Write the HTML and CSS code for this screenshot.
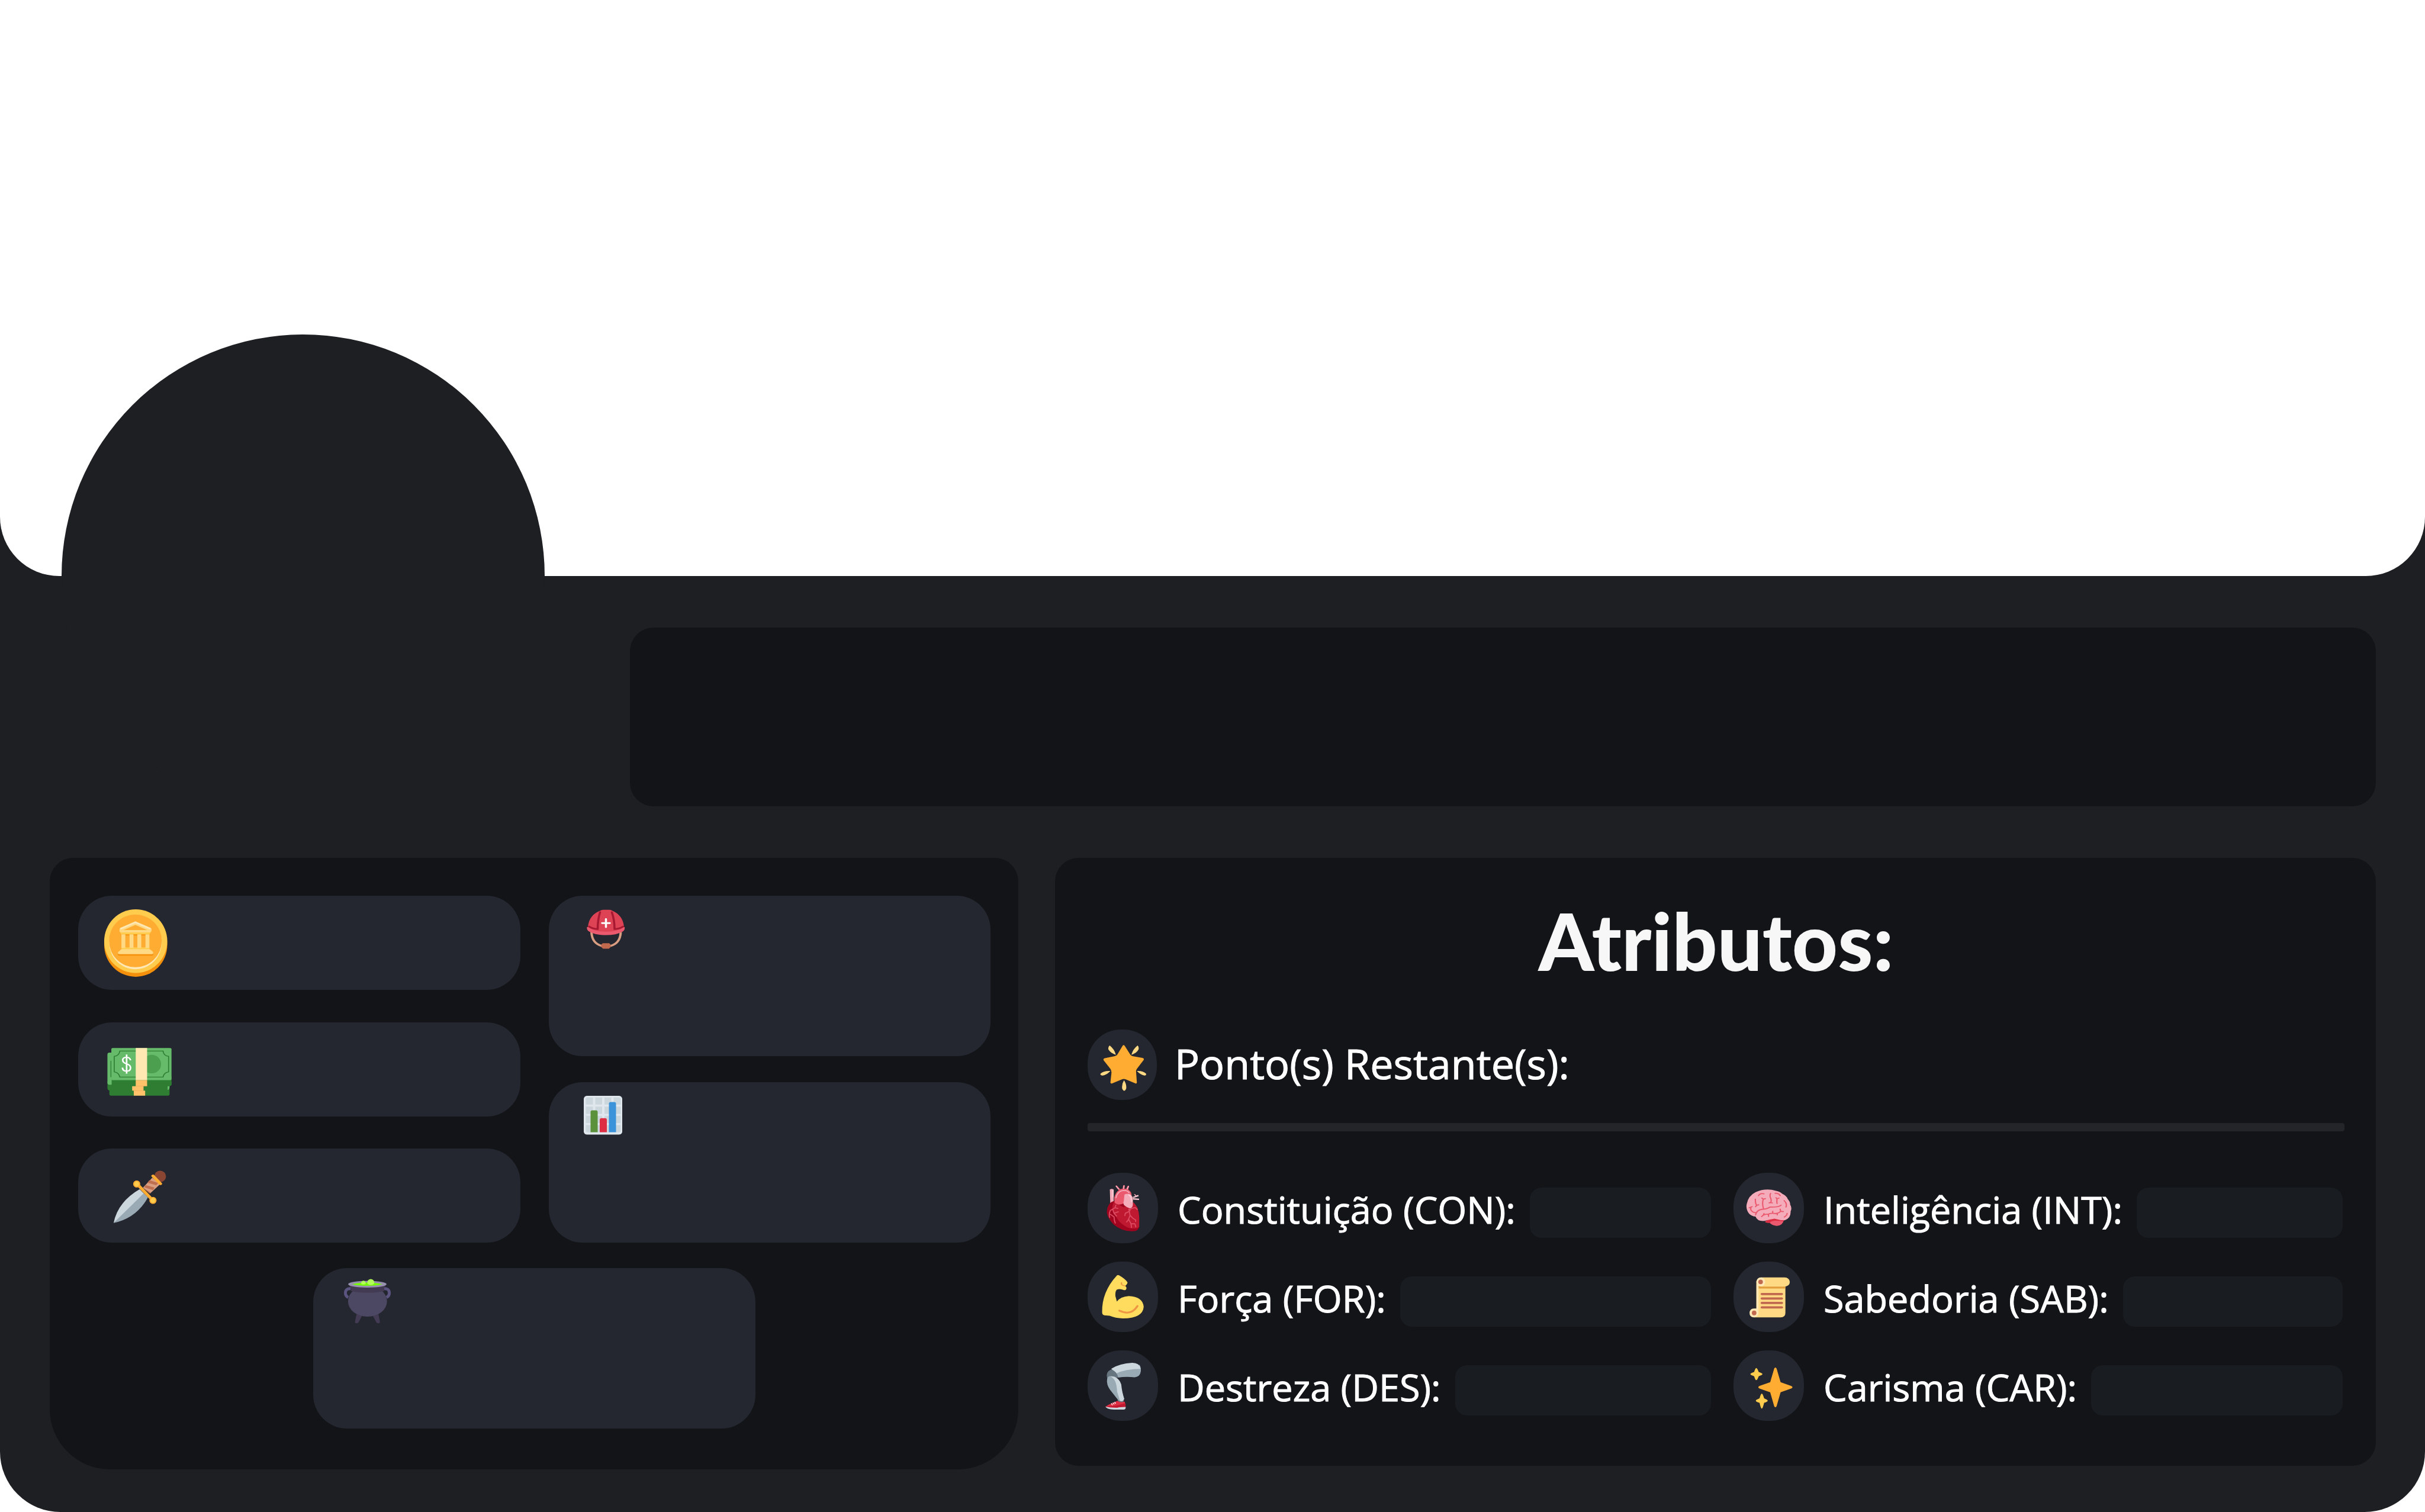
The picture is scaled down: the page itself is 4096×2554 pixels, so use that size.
FILE: index.html
```html
<!DOCTYPE html>
<html lang="pt-BR">
<head>
<meta charset="utf-8">
<title>Perfil</title>
<link rel="stylesheet" href="styles.css">
</head>
<body>
<main class="profile">
  <header class="banner"><div class="avatar"></div></header>
  <div class="content">
    <section class="bio" aria-label="Sobre"></section>
    <div class="panels">
      <section class="panel inventory" aria-label="Recursos">
        <div class="column">
          <div class="slot">
            <svg class="slot-icon" viewBox="98 164 364 375" preserveAspectRatio="none" role="img" aria-label="Moedas">
              <ellipse cx="275" cy="360" rx="97" ry="127" fill="#f4900c"/>
              <ellipse cx="275" cy="345" rx="97" ry="127" fill="#ffcc4d"/>
              <ellipse cx="274" cy="349" rx="81" ry="108" fill="#ffe8b6"/>
              <ellipse cx="274" cy="344" rx="81" ry="105" fill="#ffac33"/>
              <path fill="#f4900c" d="M231 316H317V322H231ZM220 392H329V398Q329 403 325 403H224Q220 403 220 398Z"/>
              <path fill="#ffcc4d" d="M225 300H323V306L317 318H231L225 306ZM231 370H317V379H231Z"/>
              <path fill="#ffd983" d="M274 266L321 292Q324 294 324 300Q323 310 317 310H231Q225 310 225 300Q225 294 228 292ZM231 318H243V372H231ZM256 318H268V372H256ZM280 318H292V372H280ZM305 318H317V372H305ZM231 377H318L325 384Q329 388 329 393Q329 397 325 397H224Q220 397 220 392Q220 388 225 384Z"/>
              <path d="M228 296L274 270L320 296" fill="none" stroke="#ffe8b6" stroke-width="6"/>
              <path fill="#ffac33" d="M274 280L310 301H238Z"/>
            </svg>
          </div>
          <div class="slot">
            <svg class="slot-icon" viewBox="98 664 364 375" preserveAspectRatio="none" role="img" aria-label="Dinheiro">
              <path fill="#2e7d32" d="M188 900H385V908Q385 917 379 918V949Q379 956 374 956H199Q194 956 194 949V935Q188 934 188 926Z"/>
              <path fill="#66bb6a" d="M194 784H210V912H194Q188 912 188 904V792Q188 784 194 784ZM373 918H379Q379 933 373 933Z"/>
              <path d="M199 817V882" stroke="#2e7d32" stroke-width="3"/>
              <path fill="#2e7d32" d="M201 880H385V910Q385 917 379 917H201Z"/>
              <rect x="200" y="766" width="185" height="128" rx="5" fill="#66bb6a"/>
              <path d="M226 778H359Q361 797 376 799V861Q361 864 359 882H226Q224 864 209 861V799Q224 797 226 778Z" fill="none" stroke="#2e7d32" stroke-width="3"/>
              <ellipse cx="324" cy="830" rx="29" ry="37" fill="#4b9f4f"/>
              <path fill="#ffe8b2" d="M275 766H310V894H275Z"/>
              <path fill="#ffc26b" d="M275 894H310V918H299V936H304V956H269V936H264V918H275Z"/>
              <path d="M269 936H299M275 918H310" stroke="#dba052" stroke-width="1"/>
              <path d="M259 815Q257 803 247 803Q235 803 235 814Q235 825 247 829Q259 833 259 845Q259 858 247 858Q235 858 234 844M247 792V868" fill="none" stroke="#fff" stroke-width="5"/>
            </svg>
          </div>
          <div class="slot">
            <svg class="slot-icon" viewBox="98 1168 364 374" preserveAspectRatio="none" role="img" aria-label="Adaga">
              <path fill="#ccd6dd" d="M207 1464Q220 1380 287 1330L312 1362L290 1390Z"/>
              <path fill="#99aab5" d="M207 1464L299 1347L312 1363Q278 1444 207 1464Z"/>
              <path fill="#d99e82" d="M326 1284L350 1310L319 1347L297 1324Z"/>
              <path fill="#be6f50" d="M317 1294L345 1305L338 1314L311 1304ZM306 1314L333 1323L328 1333L301 1322ZM300 1326L321 1343L317 1346Z"/>
              <ellipse cx="350" cy="1279" rx="18" ry="23" fill="#8a4633"/>
              <path d="M328 1277L351 1308M280 1310L326 1372" stroke="#ffac33" stroke-width="10" stroke-linecap="round"/>
              <g fill="#ffcc4d" stroke="#ffac33" stroke-width="4"><ellipse cx="278" cy="1309" rx="9" ry="12"/><ellipse cx="328" cy="1374" rx="9" ry="12"/></g>
            </svg>
          </div>
        </div>
        <div class="column">
          <div class="slot slot-tall">
            <svg class="slot-icon" viewBox="34 53 364 375" preserveAspectRatio="none" role="img" aria-label="Defesa">
              <path d="M178 198Q180 243 213 253M277 198Q275 243 242 253" fill="none" stroke="#d99e82" stroke-width="8"/>
              <path fill="#c1694f" d="M216 242H238L243 248V257L237 264H217L211 257V248Z"/>
              <path fill="#ea596e" d="M163 178Q227 160 290 178Q292 190 282 197Q262 210 227 210Q192 210 172 197Q161 190 163 178Z"/>
              <path fill="#dd4255" d="M166 176Q171 128 209 112Q212 109 218 109H238Q244 109 247 112Q284 130 288 176Q270 196 227 196Q184 196 166 176Z"/>
              <path d="M170 176Q182 185 199 186Q199 150 207 119M285 176Q273 185 256 186Q256 150 247 119" fill="none" stroke="#a61931" stroke-width="7" stroke-linecap="round" stroke-linejoin="round"/>
              <path d="M227 146V178M214 162H240" stroke="#fff" stroke-width="7" stroke-linecap="round"/>
            </svg>
          </div>
          <div class="slot slot-tall">
            <svg class="slot-icon" viewBox="34 795 364 375" preserveAspectRatio="none" role="img" aria-label="Nível">
              <rect x="152" y="849" width="130" height="155" rx="12" fill="#e1e8ed"/>
              <rect x="159" y="856" width="118" height="138" rx="7" fill="#ccd6dd"/>
              <path d="M159 888H277M159 925H277M159 962H277M187 856V994M218 856V994M249 856V994" stroke="#e1e8ed" stroke-width="8"/>
              <path fill="#5c913b" d="M175 994V914Q175 907 181 907H193Q199 907 199 914V994Z"/>
              <path fill="#dd2e44" d="M206 994V945Q206 938 212 938H224Q230 938 230 945V994Z"/>
              <path fill="#3b94d9" d="M237 994V881Q237 874 243 874H255Q261 874 261 881V994Z"/>
            </svg>
          </div>
        </div>
        <div class="slot slot-tall slot-center">
          <svg class="slot-icon" viewBox="66 96 765 608" preserveAspectRatio="none" role="img" aria-label="Poções">
            <path fill="#433b53" d="M346 394L382 404L358 448Q350 455 341 452Q335 448 336 441ZM488 394L451 404L475 448Q483 455 492 452Q498 448 497 441Z"/>
            <path d="M308 229Q276 226 274 256Q274 276 292 286M524 229Q556 226 558 256Q558 276 540 286" fill="none" stroke="#5c5480" stroke-width="19"/>
            <ellipse cx="417" cy="310" rx="126" ry="100" fill="#4c4763"/>
            <path fill="#433b53" d="M297 203H537Q522 225 524 244Q480 255 417 255Q354 255 310 244Q312 225 297 203Z"/>
            <ellipse cx="416" cy="200" rx="124" ry="22" fill="#9790ae"/>
            <path fill="#77ff00" d="M318 200Q360 190 416 190Q472 190 513 200Q472 210 416 210Q360 210 318 200Z"/>
            <path fill="#b2ff59" d="M375 196Q376 178 391 177Q405 178 406 196Q400 202 391 202Q380 202 375 196ZM416 194Q413 170 438 167Q463 170 460 194Q453 205 438 205Q423 205 416 194Z"/>
          </svg>
        </div>
      </section>

      <section class="panel attributes">
        <h1 class="title">Atributos:</h1>
        <div class="points">
          <span class="badge">
            <svg viewBox="108 111 194 456" preserveAspectRatio="none" aria-hidden="true">
              <path fill="#ffac33" d="M209 212Q211 212 213 220L227 271Q229 280 234 283L262 295Q267 298 265 308L246 366Q243 376 244 390L246 453Q246 464 242 460L214 433Q209 429 205 433L177 460Q172 464 172 453L175 390Q175 376 172 366L153 310Q151 300 156 297L184 283Q190 280 192 271L205 220Q207 212 209 212Z"/>
              <g fill="#ffd983"><path d="M170 214Q184 240 187 275Q172 262 166 238Q166 220 170 214ZM248 214Q234 240 231 275Q246 262 251 238Q252 220 248 214ZM172 379Q162 404 151 409Q143 410 144 397Q152 377 172 379ZM246 379Q256 404 267 409Q273 410 272 397Q264 377 246 379ZM210 440Q218 466 216 495Q213 508 211 508Q208 508 205 495Q203 466 210 440Z"/></g>
            </svg>
          </span>
          <span class="points-label">Ponto(s) Restante(s):</span>
        </div>
        <hr class="divider">
        <form class="stats">
          <div class="stat">
            <span class="badge">
              <svg viewBox="-51 -42 453 453" aria-hidden="true">
                <path fill="#ea596e" d="M129 43Q135 36 141 44L158 64L174 60L178 40Q184 34 189 41L186 60L197 62L206 43Q213 38 216 46L210 66Q232 80 232 104L180 160Q140 170 122 150L120 118Q130 82 150 70Z"/>
                <path fill="#f4abba" d="M92 66Q104 58 117 66V140Q108 152 95 152Z"/>
                <path d="M112 68V115" stroke="#ffd0d8" stroke-width="7"/>
                <path d="M132 118Q142 76 178 72Q205 70 216 86M133 44L148 62M183 42L181 58M212 45L204 61" fill="none" stroke="#f4abba" stroke-width="7" stroke-linecap="round"/>
                <path fill="#a0041e" d="M120 140Q96 145 84 166Q70 190 74 220Q80 254 118 292Q168 333 230 334Q274 336 279 310L270 180Z"/>
                <path fill="#be1931" d="M124 140Q100 170 112 210Q130 236 150 268Q190 310 230 316Q270 318 281 306V240Q278 180 244 148L180 180Q150 166 124 140Z"/>
                <path fill="#ea596e" d="M124 130L186 98L184 152Q160 168 138 160Q124 154 122 146Z"/>
                <path fill="#f4abba" d="M186 98Q208 88 228 100L241 118L240 166Q236 186 220 186Q200 180 184 166Q176 155 182 140Z"/>
                <path d="M212 98Q232 106 232 146M242 117L276 104M242 126L280 129" fill="none" stroke="#ffccd5" stroke-width="9"/>
                <path d="M262 108L250 96" stroke="#f4abba" stroke-width="6"/>
                <path d="M132 164L125 183L95 201Q84 226 92 248M125 183L146 188M111 194L119 218L138 212L149 208M119 218L137 238M94 224L119 242Q120 265 128 284M214 190L222 232L210 262L198 276M214 190L224 202M222 232L240 250L258 262V274M214 208L192 218L188 236M214 258L228 286L232 312M228 286L253 286L260 308M218 196L236 186L256 182L270 196" fill="none" stroke="#dd4b63" stroke-width="7" stroke-linejoin="round"/>
              </svg>
            </span>
            <label for="con">Constituição (CON):</label>
            <input id="con" class="field" type="text">
          </div>
          <div class="stat">
            <span class="badge">
              <svg viewBox="76 68 338 395" preserveAspectRatio="none" aria-hidden="true">
                <path fill="#ea596e" d="M228 340L272 328L317 334Q312 364 283 366Q260 364 249 348Q236 350 228 344Z"/>
                <path fill="#dd2e44" d="M228 342Q246 324 272 324Q300 330 320 332L316 340Q292 336 272 337Q256 340 247 349Q234 349 228 342Z"/>
                <path fill="#f4abba" d="M138 256Q142 200 182 177Q230 152 280 169Q298 172 310 186Q330 196 336 215Q348 230 348 246Q358 266 350 284Q352 322 322 334Q298 334 272 325Q246 330 226 338Q190 342 182 314Q140 306 138 256Z"/>
                <path d="M196 196Q204 181 222 186M276 183Q292 182 300 196M181 216Q180 240 187 250M197 248L187 250L182 258M254 184Q248 196 255 212Q259 226 254 236M247 237L254 234L262 237M212 210L219 216L229 213M219 216Q212 240 220 270M280 208L285 214L294 210M285 214Q283 230 285 240M319 224Q334 240 328 260M159 260V276Q170 296 188 290M152 264L165 258M182 304Q186 278 212 273Q236 272 252 260Q290 262 304 250M211 314Q222 298 240 301Q256 292 276 297Q298 294 302 282L300 272M302 284L315 286M222 297L220 304M244 301V312M264 284V295M286 296V304M320 316Q334 306 333 296" fill="none" stroke="#ea596e" stroke-width="6" stroke-linecap="round" stroke-linejoin="round"/>
              </svg>
            </span>
            <label for="int">Inteligência (INT):</label>
            <input id="int" class="field" type="text">
          </div>
          <div class="stat">
            <span class="badge">
              <svg viewBox="96 570 339 395" preserveAspectRatio="none" aria-hidden="true">
                <path fill="#ffdc5d" d="M237 648Q242 643 250 649Q276 666 288 686Q289 694 277 707Q284 711 283 722Q280 732 272 730Q250 720 236 728Q228 740 230 764L237 794Q254 766 294 763Q362 766 366 824Q362 888 266 889Q230 888 202 874L176 871Q166 868 166 854Q164 740 237 648Z"/>
                <path d="M259 686Q257 696 260 699Q268 706 277 706M258 690L263 692" fill="none" stroke="#ef9645" stroke-width="5"/>
                <path d="M249 845Q306 876 336 819" fill="none" stroke="#ef9645" stroke-width="10" stroke-linecap="round"/>
              </svg>
            </span>
            <label for="for">Força (FOR):</label>
            <input id="for" class="field" type="text">
          </div>
          <div class="stat">
            <span class="badge">
              <svg viewBox="76 570 338 395" preserveAspectRatio="none" aria-hidden="true">
                <path fill="#ffd983" d="M186 690H325V858Q325 883 302 883H174V850H186Z"/>
                <path fill="#e39f3d" d="M196 706H324V721H196Z"/>
                <path fill="#ffe8b6" d="M186 680H196V858Q194 883 174 883Q153 882 153 858Q154 834 174 833H186Z"/>
                <rect x="186" y="659" width="160" height="51" rx="24" fill="#ffd983"/>
                <ellipse cx="207" cy="684" rx="21" ry="25" fill="#ffe8b6"/>
                <g fill="#c1694f"><ellipse cx="206" cy="684" rx="11" ry="13"/><ellipse cx="175" cy="858" rx="11" ry="13"/></g>
                <path d="M212 752H308M212 777H308M212 802H308M212 827H308" stroke="#c1694f" stroke-width="12" stroke-linecap="round"/>
              </svg>
            </span>
            <label for="sab">Sabedoria (SAB):</label>
            <input id="sab" class="field" type="text">
          </div>
          <div class="stat">
            <span class="badge">
              <svg viewBox="96 1069 339 395" preserveAspectRatio="none" aria-hidden="true">
                <path fill="#99aab5" d="M215 1176L346 1150Q354 1165 352 1188Q348 1218 322 1220Q280 1214 242 1222Z"/>
                <path fill="#ccd6dd" d="M210 1172Q252 1142 310 1139Q346 1138 351 1173Q280 1174 231 1199Z"/>
                <path fill="#66757f" d="M209 1176Q236 1184 244 1222L190 1224Q182 1190 209 1176ZM240 1346H271L268 1362H246Z"/>
                <path fill="#99aab5" d="M190 1230Q192 1212 210 1214L240 1228Q258 1256 258 1286L272 1340Q268 1354 245 1350L204 1290Q186 1260 190 1230Z"/>
                <path fill="#ccd6dd" d="M206 1214Q244 1212 258 1260Q262 1306 272 1340Q268 1358 252 1353L238 1300Q236 1230 206 1214Z"/>
                <path fill="#dd2e44" d="M240 1352Q252 1364 275 1356L279 1388L215 1394L182 1384Q196 1374 208 1368Z"/>
                <path fill="#be1931" d="M182 1382Q230 1384 260 1370L279 1366V1388H190Z"/>
                <path fill="#ccd6dd" d="M182 1384Q210 1392 240 1391Q248 1386 279 1386V1394Q277 1401 270 1401H222Q188 1398 182 1384Z"/>
                <path d="M210 1366L216 1376M218 1362L224 1372M226 1358L231 1368" stroke="#fff" stroke-width="4"/>
              </svg>
            </span>
            <label for="des">Destreza (DES):</label>
            <input id="des" class="field" type="text">
          </div>
          <div class="stat">
            <span class="badge">
              <svg viewBox="76 1069 338 395" preserveAspectRatio="none" aria-hidden="true">
                <path fill="#ffac33" d="M277 1165Q281 1165 283 1172L302 1247L352 1268Q359 1271 359 1276Q359 1280 352 1283L302 1304L283 1381Q281 1388 277 1388Q273 1388 271 1381L252 1304L201 1283Q195 1280 195 1276Q195 1271 201 1268L252 1247L271 1172Q273 1165 277 1165Z"/>
                <path fill="#ffcc4d" d="M185 1168Q190 1168 197 1190Q215 1197 215 1202Q215 1207 197 1214Q190 1236 185 1236Q181 1236 175 1214Q157 1207 157 1202Q157 1197 175 1190Q181 1168 185 1168ZM212 1311Q216 1311 223 1338Q240 1346 240 1351Q240 1357 223 1363Q216 1396 212 1396Q207 1396 201 1363Q183 1357 183 1351Q183 1346 201 1338Q207 1311 212 1311Z"/>
              </svg>
            </span>
            <label for="car">Carisma (CAR):</label>
            <input id="car" class="field" type="text">
          </div>
        </form>
      </section>
    </div>
  </div>
</main>
</body>
</html>
```
FILE: styles.css
```css
* { box-sizing: border-box; }

body {
  margin: 0;
  background: #fff;
  color: #fff;
  font-family: "Open Sans", "Noto Sans", sans-serif;
}

.profile {
  min-height: 100vh;
  background: #1e1f23;
  border-radius: 0 0 102px 102px;
}

.banner {
  position: relative;
  aspect-ratio: 4096 / 973;
  background: #fff;
  border-radius: 0 0 100px 100px;
}

.avatar {
  position: absolute;
  left: 104px;
  top: 565px;
  width: 816px;
  height: 816px;
  border-radius: 50%;
  background: #1e1f23;
}

.content {
  position: relative;
  display: flex;
  flex-direction: column;
  gap: 87px;
  padding: 87px 83px 72px 84px;
}

.bio {
  height: 302px;
  margin-left: 980px;
  border-radius: 40px;
  background: #121418;
}

.panels {
  display: grid;
  grid-template-columns: minmax(0, 1636fr) minmax(0, 2231fr);
  gap: 62px;
  align-items: start;
}

.panel {
  border-radius: 40px;
  background: #121418;
}

.inventory {
  display: grid;
  grid-template-columns: 1fr 1fr;
  gap: 43px 48px;
  padding: 64px 47px 69px 48px;
  border-radius: 40px 40px 102px 102px;
}

.column {
  display: flex;
  flex-direction: column;
  justify-content: space-between;
  gap: 44px;
}

.slot {
  height: 159px;
  border-radius: 57px;
  background: #24272f;
}

.slot-tall { height: 271px; }

.slot-center {
  grid-column: 1 / -1;
  justify-self: center;
  width: 747px;
}

.slot-icon {
  display: block;
  width: 200px;
  height: 159px;
}

.column .slot-tall .slot-icon { width: 182px; }

.attributes { padding: 50px 53px 76px 55px; }

.title {
  margin: 0;
  color: #f7f7f7;
  font-family: Lato, "Open Sans", sans-serif;
  font-size: 134px;
  font-weight: 900;
  line-height: 180px;
  text-align: center;
}

.points {
  display: flex;
  align-items: center;
  gap: 30px;
  margin-top: 60px;
}

.points-label {
  padding-bottom: 6px;
  font-size: 70px;
  font-weight: 500;
  line-height: 96px;
  -webkit-text-stroke: 1px #fff;
}

.badge {
  flex: none;
  width: 119px;
  height: 119px;
  border-radius: 56px;
  background: #24272f;
}

.points .badge { width: 117px; }

.badge svg {
  display: block;
  width: 100%;
  height: 100%;
}

.divider {
  height: 14px;
  margin: 39px 0 70px;
  border: 0;
  border-radius: 4px;
  background: #242529;
}

.stats {
  display: grid;
  grid-template-columns: minmax(0, 1053fr) minmax(0, 1029fr);
  gap: 31px 38px;
  padding-right: 3px;
}

.stat {
  display: flex;
  align-items: center;
}

.stat label {
  flex: none;
  margin: 0 24px 0 33px;
  padding-top: 4px;
  font-size: 63px;
  font-weight: 500;
  line-height: 85px;
  -webkit-text-stroke: 1px #fff;
}

.field {
  flex: 1;
  width: 0;
  min-width: 0;
  height: 85px;
  margin-top: 16px;
  padding: 0 20px;
  border: 0;
  border-radius: 20px;
  background: #191c20;
  color: #fff;
  font: inherit;
  font-size: 48px;
}
```
